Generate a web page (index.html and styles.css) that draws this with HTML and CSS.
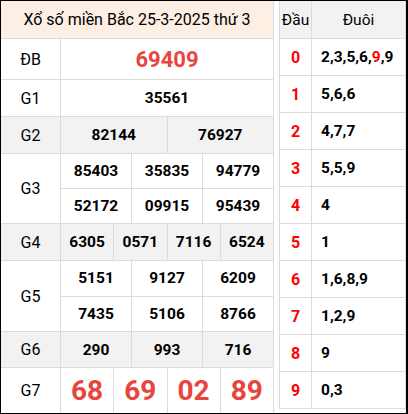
FILE: index.html
```html
<!DOCTYPE html>
<html lang="vi">
<head>
<meta charset="utf-8">
<title>Xổ số miền Bắc 25-3-2025</title>
<link rel="stylesheet" href="styles.css">
</head>
<body>
<div class="kq">
  <div class="title">Xổ số miền Bắc 25-3-2025 thứ 3</div>
  <div class="prize r-db"><div class="lbl">ĐB</div><div class="vals c1"><div class="cell db">69409</div></div></div>
  <div class="prize r-g1"><div class="lbl">G1</div><div class="vals c1"><div class="cell">35561</div></div></div>
  <div class="prize r-g2 grey"><div class="lbl">G2</div><div class="vals c2"><div class="cell">82144</div><div class="cell">76927</div></div></div>
  <div class="prize r-g3"><div class="lbl">G3</div><div class="vals c3"><div class="cell">85403</div><div class="cell">35835</div><div class="cell">94779</div><div class="cell">52172</div><div class="cell">09915</div><div class="cell">95439</div></div></div>
  <div class="prize r-g4 grey"><div class="lbl">G4</div><div class="vals c4"><div class="cell">6305</div><div class="cell">0571</div><div class="cell">7116</div><div class="cell">6524</div></div></div>
  <div class="prize r-g5"><div class="lbl">G5</div><div class="vals c3"><div class="cell">5151</div><div class="cell">9127</div><div class="cell">6209</div><div class="cell">7435</div><div class="cell">5106</div><div class="cell">8766</div></div></div>
  <div class="prize r-g6 grey"><div class="lbl">G6</div><div class="vals c3"><div class="cell">290</div><div class="cell">993</div><div class="cell">716</div></div></div>
  <div class="prize r-g7 last"><div class="lbl">G7</div><div class="vals c4"><div class="cell g7">68</div><div class="cell g7">69</div><div class="cell g7">02</div><div class="cell g7">89</div></div></div>
</div>
<div class="loto">
  <div class="lh">Đầu</div><div class="lh">Đuôi</div>
  <div class="dau">0</div><div class="duoi">2,3,5,6,<span class="hl">9</span>,9</div>
  <div class="dau">1</div><div class="duoi">5,6,6</div>
  <div class="dau">2</div><div class="duoi">4,7,7</div>
  <div class="dau">3</div><div class="duoi">5,5,9</div>
  <div class="dau">4</div><div class="duoi">4</div>
  <div class="dau">5</div><div class="duoi">1</div>
  <div class="dau">6</div><div class="duoi">1,6,8,9</div>
  <div class="dau">7</div><div class="duoi">1,2,9</div>
  <div class="dau">8</div><div class="duoi">9</div>
  <div class="dau">9</div><div class="duoi">0,3</div>
</div>
</body>
</html>
```

FILE: styles.css
```css
html, body {
  margin: 0;
  padding: 0;
}

body {
  width: 408px;
  height: 414px;
  box-sizing: border-box;
  border: 1px solid #000;
  border-right-width: 2px;
  background: #fff;
  font-family: Roboto, "Liberation Sans", sans-serif;
  color: #000;
  display: flex;
  gap: 5px;
  align-items: flex-start;
}

.kq {
  width: 273px;
  box-sizing: border-box;
  border-right: 1px solid #dcdcdc;
  display: flex;
  flex-direction: column;
}

.title {
  height: 38px;
  box-sizing: border-box;
  border-bottom: 1px solid #dcdcdc;
  background: #fdefe3;
  display: flex;
  align-items: center;
  justify-content: center;
  font-size: 16px;
  padding-bottom: 1px;
}

.prize {
  display: grid;
  grid-template-columns: 60px 1fr;
  box-sizing: border-box;
  border-bottom: 1px solid #dcdcdc;
}

.prize.last {
  border-bottom: none;
}

.r-db { height: 41px; }
.r-g1 { height: 37px; }
.r-g2 { height: 37px; }
.r-g3 { height: 70px; }
.r-g4 { height: 37px; }
.r-g5 { height: 71px; }
.r-g6 { height: 36px; }
.r-g7 { height: 45px; }

.lbl {
  box-sizing: border-box;
  border-right: 1px solid #dcdcdc;
  display: flex;
  align-items: center;
  justify-content: center;
  font-size: 16px;
}

.vals {
  display: grid;
  gap: 1px;
  background: #dcdcdc;
}

.c1 { grid-template-columns: 1fr; }
.c2 { grid-template-columns: repeat(2, 1fr); }
.c3 { grid-template-columns: repeat(3, 1fr); }
.c4 { grid-template-columns: repeat(4, 1fr); }

.cell {
  background: #fff;
  display: flex;
  align-items: center;
  justify-content: center;
  font-size: 15.5px;
  font-weight: 700;
}

.grey .lbl,
.grey .cell {
  background: #f2f2f2;
}

.grey .lbl {
  background: #f2f2f2;
}

.cell.db {
  font-size: 22px;
  color: #e8453c;
}

.cell.g7 {
  font-size: 28px;
  color: #e8453c;
}

.loto {
  width: 127px;
  box-sizing: border-box;
  padding: 0 1px 1px 1px;
  background: #dcdcdc;
  display: grid;
  grid-template-columns: 31px 1fr;
  grid-template-rows: 37px repeat(10, 36px);
  gap: 1px;
}

.lh {
  background: #f2f2f2;
  display: flex;
  align-items: center;
  justify-content: center;
  font-size: 15.5px;
}

.dau {
  background: #fff;
  display: flex;
  align-items: center;
  justify-content: center;
  font-size: 16px;
  font-weight: 700;
  color: #f00;
}

.duoi {
  background: #fff;
  display: flex;
  align-items: center;
  padding-left: 9px;
  font-size: 15.5px;
  font-weight: 700;
}

.hl {
  color: #f00;
}
```
